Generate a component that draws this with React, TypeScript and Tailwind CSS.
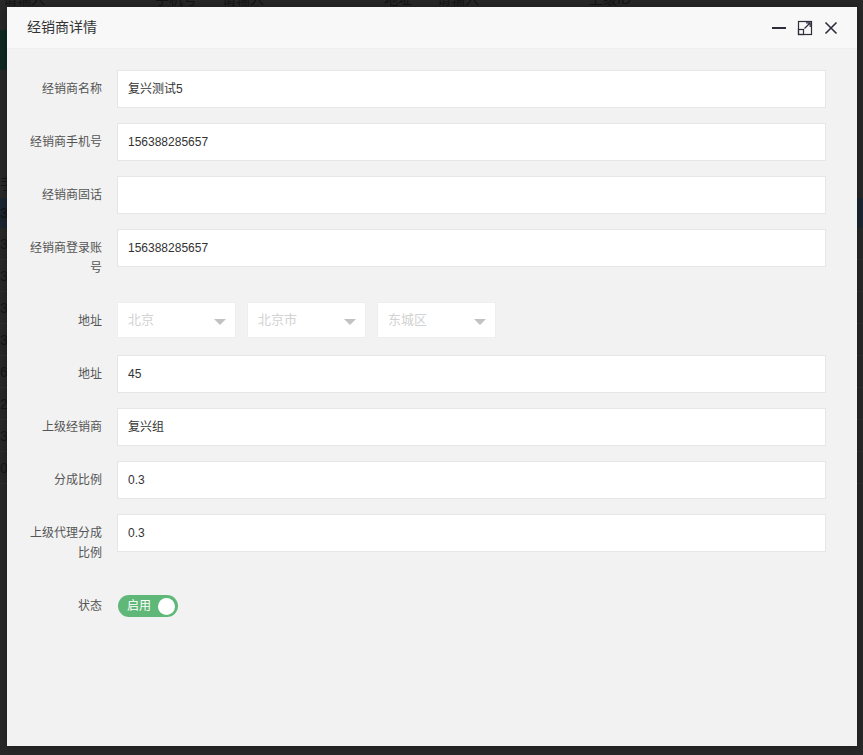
import React from 'react';

const font = { fontFamily: '"Liberation Sans", "Noto Sans CJK SC", sans-serif' };

type Field = { label: string; value?: string; kind?: 'input' | 'select' | 'switch' };

const FIELDS: Field[] = [
  { label: '经销商名称', value: '复兴测试5' },
  { label: '经销商手机号', value: '156388285657' },
  { label: '经销商固话', value: '' },
  { label: '经销商登录账号', value: '156388285657' },
  { label: '地址', kind: 'select' },
  { label: '地址', value: '45' },
  { label: '上级经销商', value: '复兴组' },
  { label: '分成比例', value: '0.3' },
  { label: '上级代理分成比例', value: '0.3' },
  { label: '状态', kind: 'switch' },
];

const REGIONS = ['北京', '北京市', '东城区'];

// dimmed page behind the layer
function Backdrop() {
  const rows = ['3', '3', '3', '3', '6', '2', '3', '0'];
  return (
    <div className="absolute inset-0 bg-[#282828] text-[#141414] text-[14px]">
      <div className="-mt-[9px] flex h-[16px] leading-[16px]">
        <span className="ml-[3px]">请输入</span>
        <span className="ml-[110px]">手机号</span>
        <span className="ml-[25px]">请输入</span>
        <span className="ml-[120px]">地址</span>
        <span className="ml-[25px]">请输入</span>
        <span className="ml-[110px]">上级ID</span>
      </div>
      <div className="mt-[23px] h-[40px] w-[8px] bg-[#0e2a20]" />
      <div className="mt-[100px] flex flex-col">
        <div className="h-[28px] leading-[28px]">手</div>
        <div className="h-[30px] bg-[#1c2630] leading-[30px]">38</div>
        {rows.map((r, i) => (
          <div key={i} className="h-[32px] border-b border-[#2e2e2e] leading-[32px] text-[#161616]">{r}</div>
        ))}
      </div>
    </div>
  );
}

function Select({ text }: { text: string }) {
  return (
    <div className="relative flex h-[36px] w-[119px] items-center border border-[#eeeeee] bg-white pl-[10px] text-[13px] text-[#d2d2d2]">
      {text}
      <span className="absolute right-[9px] top-[16px] h-0 w-0 border-x-[6px] border-t-[6px] border-x-transparent border-t-[#c2c2c2]" />
    </div>
  );
}

function Row({ f }: { f: Field }) {
  return (
    <div className="mb-[15px] flex items-start">
      <label className="w-[110px] shrink-0 py-[9px] pl-[17px] pr-[15px] text-right text-[12px] leading-[20px] text-[#555]">
        {f.label}
      </label>
      {f.kind === 'select' ? (
        <div className="flex gap-[11px]">
          {REGIONS.map((r) => <Select key={r} text={r} />)}
        </div>
      ) : f.kind === 'switch' ? (
        <div className="ml-px mt-[8px] flex h-[22px] w-[60px] items-center justify-between rounded-full bg-[#5FB878] pl-[9px] pr-[3px] text-[12px] text-white">
          <span>启用</span>
          <span className="h-[17px] w-[17px] rounded-full bg-white" />
        </div>
      ) : (
        <div className="flex h-[38px] flex-1 items-center border border-[#e6e6e6] bg-white pl-[10px] text-[12px] text-[#333]">
          {f.value}
        </div>
      )}
    </div>
  );
}

export default function App() {
  return (
    <div className="relative h-[755px] w-[863px] overflow-hidden" style={font}>
      <Backdrop />
      <div className="absolute left-[7px] top-[7px] flex h-[739px] w-[850px] flex-col bg-[#f2f2f2] shadow-[0_0_8px_rgba(0,0,0,0.3)]">
        {/* title bar */}
        <div className="flex h-[42px] shrink-0 items-center justify-between border-b border-[#eeeeee] bg-[#f8f8f8] pl-[20px] pr-[18px]">
          <span className="text-[14px] text-[#333]">经销商详情</span>
          <div className="flex items-center gap-[10px]">
            <svg width="16" height="16" viewBox="0 0 16 16">
              <rect x="1" y="7" width="14" height="2" fill="#2e2d3c" />
            </svg>
            <svg width="16" height="16" viewBox="0 0 16 16" fill="none" stroke="#2e2d3c" strokeWidth="1.2">
              <rect x="1.5" y="1.5" width="13" height="13" />
              <rect x="1.5" y="9.5" width="5" height="5" />
              <path d="M7.5 8.5 L13 3 M9 2.8 L13.2 2.8 L13.2 7" />
            </svg>
            <svg width="16" height="16" viewBox="0 0 16 16" fill="none" stroke="#2e2d3c" strokeWidth="1.6">
              <path d="M2.5 2.5 L13.5 13.5 M13.5 2.5 L2.5 13.5" />
            </svg>
          </div>
        </div>
        {/* form */}
        <div className="pr-[31px] pt-[21px]">
          {FIELDS.map((f, i) => <Row key={i} f={f} />)}
        </div>
      </div>
    </div>
  );
}
